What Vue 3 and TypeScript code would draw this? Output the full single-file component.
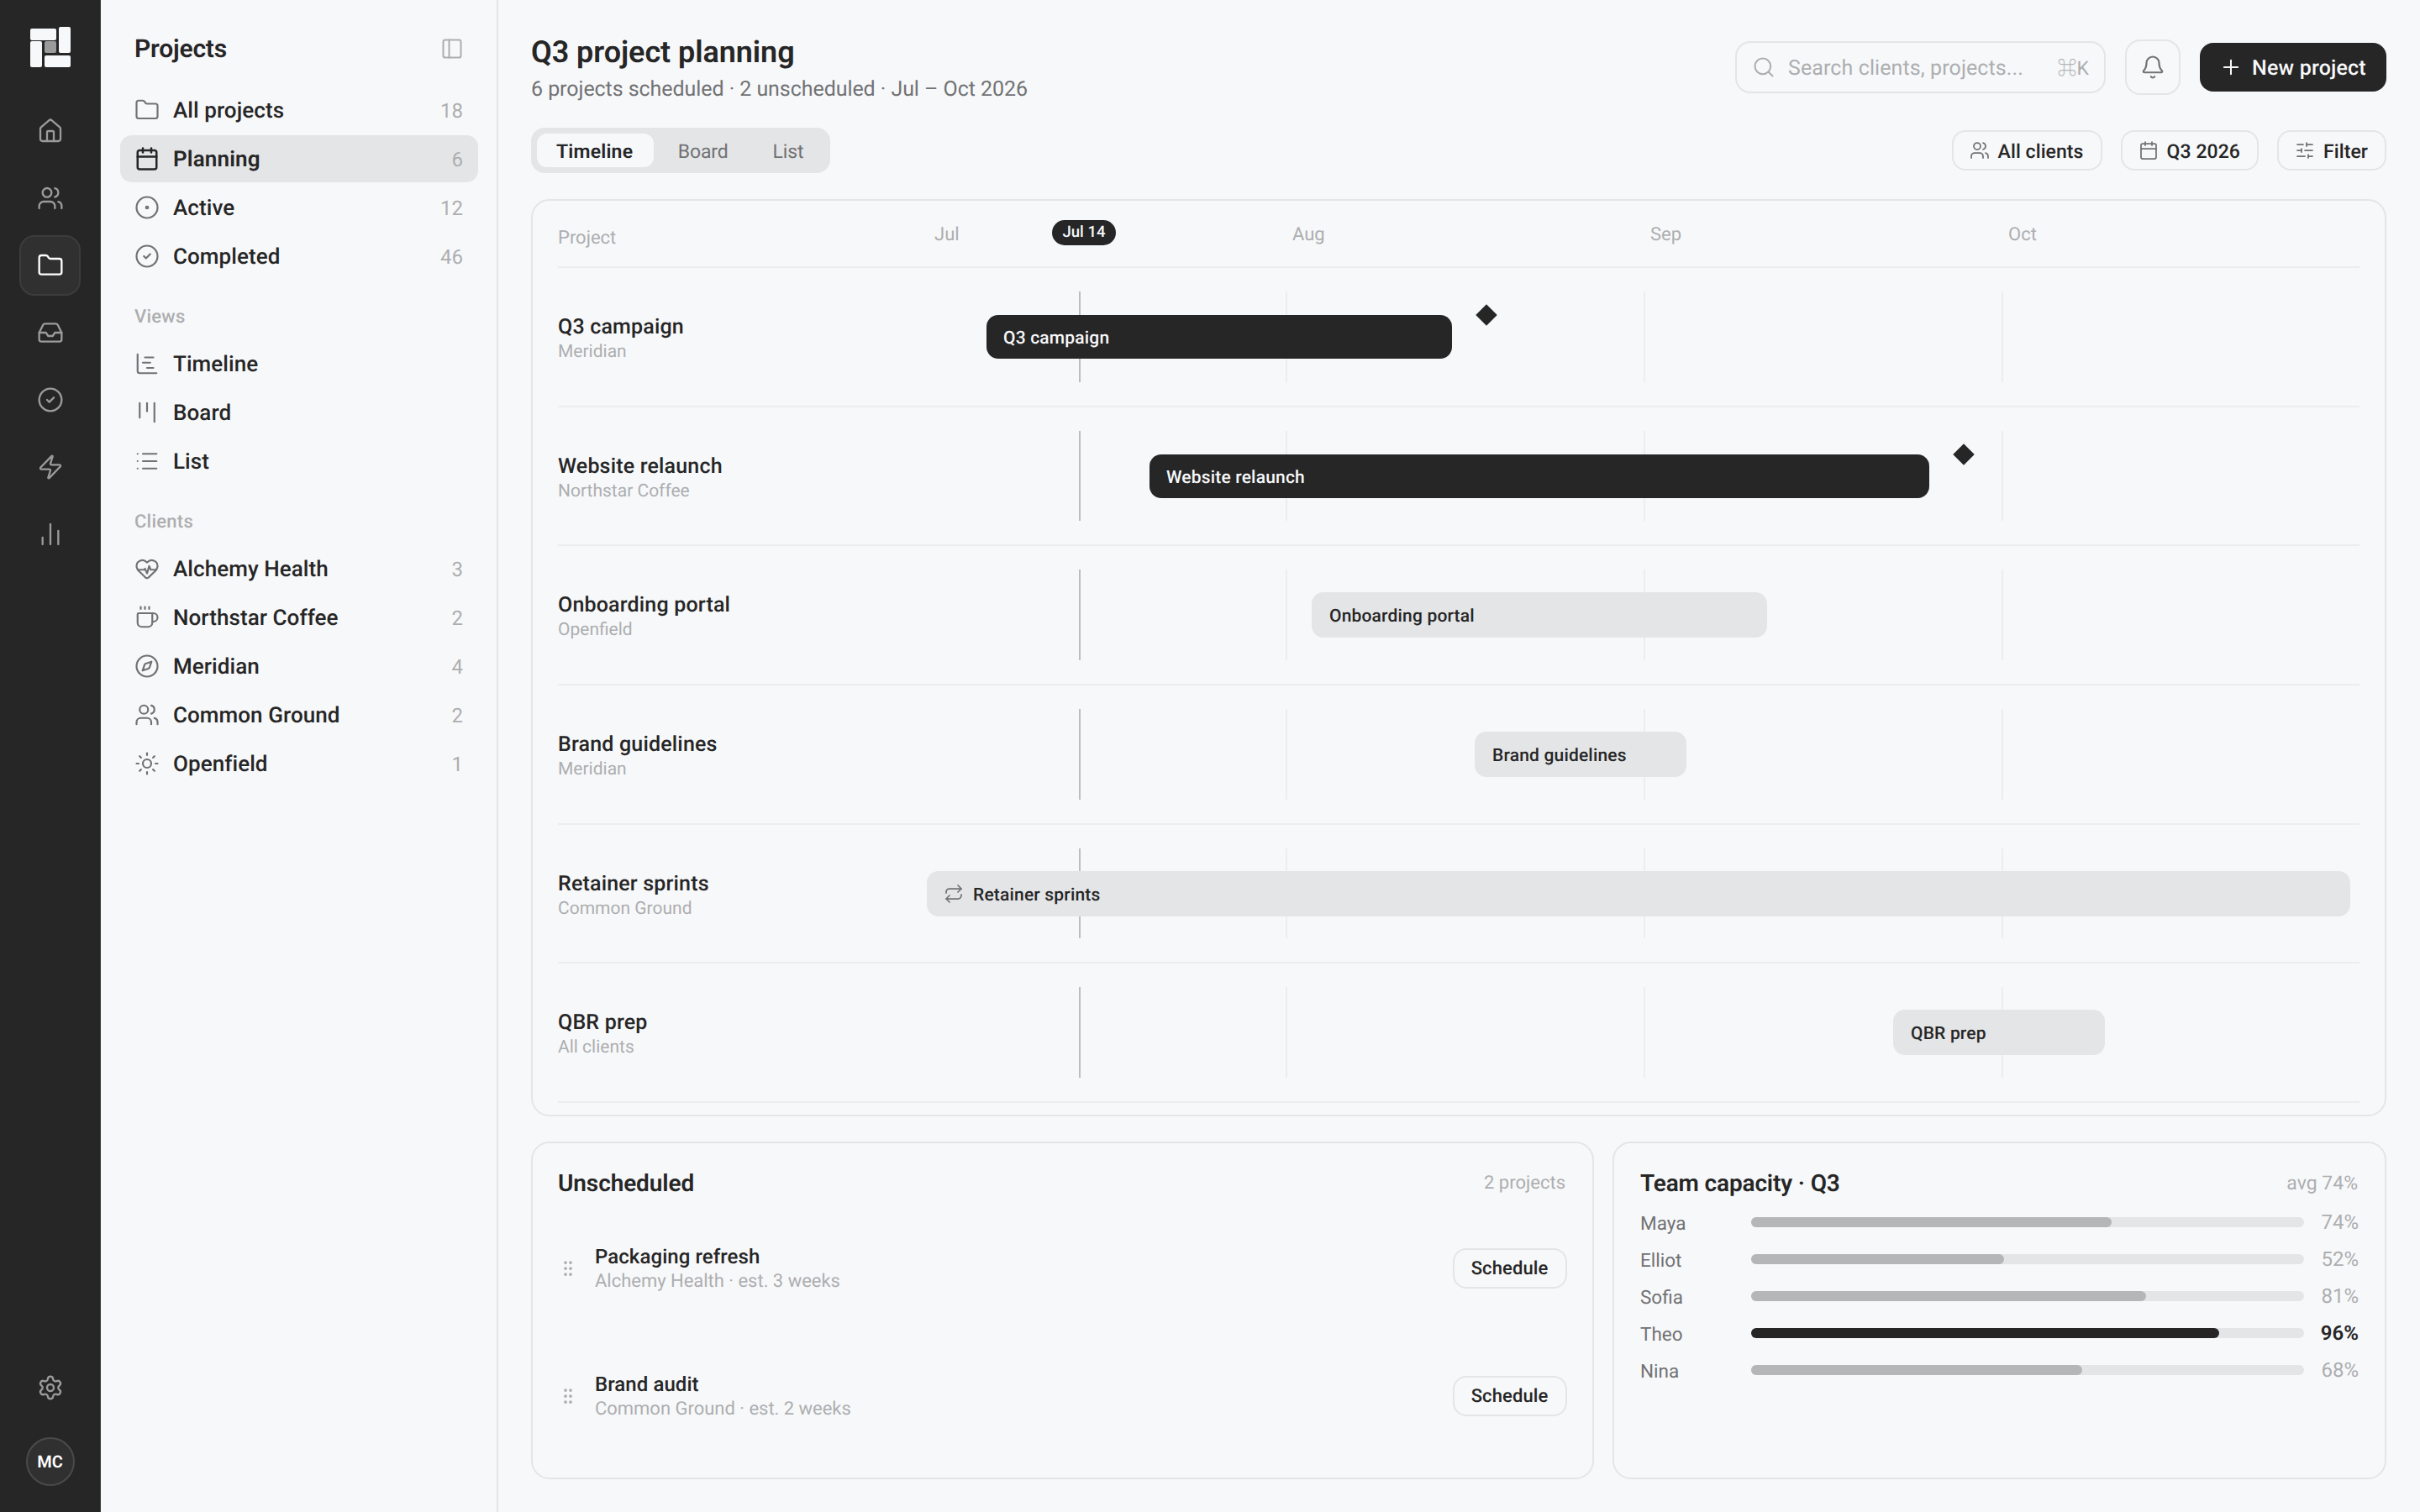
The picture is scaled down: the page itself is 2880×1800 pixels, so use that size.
<script setup lang="ts">
import { h, type FunctionalComponent } from 'vue'

type Shape = string | [number, number, number] | [number, number, number, number, number]

/* String = path, three numbers = circle (cx, cy, r), five = rect (x, y, w, h, rx). */
const glyphs: Record<string, Shape[]> = {
  home: ['M15 21v-8a1 1 0 0 0-1-1h-4a1 1 0 0 0-1 1v8', 'M3 10a2 2 0 0 1 .709-1.528l7-6a2 2 0 0 1 2.582 0l7 6A2 2 0 0 1 21 10v9a2 2 0 0 1-2 2H5a2 2 0 0 1-2-2z'],
  users: ['M16 21v-2a4 4 0 0 0-4-4H6a4 4 0 0 0-4 4v2', 'M16 3.128a4 4 0 0 1 0 7.744', 'M22 21v-2a4 4 0 0 0-3-3.87', [9, 7, 4]],
  folder: ['M20 20a2 2 0 0 0 2-2V8a2 2 0 0 0-2-2h-7.9a2 2 0 0 1-1.69-.9L9.6 3.9A2 2 0 0 0 7.93 3H4a2 2 0 0 0-2 2v13a2 2 0 0 0 2 2Z'],
  inbox: ['M22 12h-6l-2 3h-4l-2-3H2', 'M5.45 5.11 2 12v6a2 2 0 0 0 2 2h16a2 2 0 0 0 2-2v-6l-3.45-6.89A2 2 0 0 0 16.76 4H7.24a2 2 0 0 0-1.79 1.11z'],
  check: [[12, 12, 10], 'm9 12 2 2 4-4'],
  zap: ['M4 14a1 1 0 0 1-.78-1.63l9.9-10.2a.5.5 0 0 1 .86.46l-1.92 6.02A1 1 0 0 0 13 10h7a1 1 0 0 1 .78 1.63l-9.9 10.2a.5.5 0 0 1-.86-.46l1.92-6.02A1 1 0 0 0 11 14z'],
  chart: ['M5 21v-6', 'M12 21V3', 'M19 21V9'],
  settings: ['M9.671 4.136a2.34 2.34 0 0 1 4.659 0 2.34 2.34 0 0 0 3.319 1.915 2.34 2.34 0 0 1 2.33 4.033 2.34 2.34 0 0 0 0 3.831 2.34 2.34 0 0 1-2.33 4.033 2.34 2.34 0 0 0-3.319 1.915 2.34 2.34 0 0 1-4.659 0 2.34 2.34 0 0 0-3.32-1.915 2.34 2.34 0 0 1-2.33-4.033 2.34 2.34 0 0 0 0-3.831A2.34 2.34 0 0 1 6.35 6.051a2.34 2.34 0 0 0 3.319-1.915', [12, 12, 3]],
  panel: [[3, 3, 18, 18, 2], 'M9 3v18'],
  calendar: ['M8 2v4', 'M16 2v4', [3, 4, 18, 18, 2], 'M3 10h18'],
  dot: [[12, 12, 10], [12, 12, 1]],
  gantt: ['M3 3v16a2 2 0 0 0 2 2h16', 'M10 6h8', 'M8 11h7', 'M12 16h6'],
  board: ['M5 3v14', 'M12 3v8', 'M19 3v18'],
  list: ['M3 5h.01', 'M3 12h.01', 'M3 19h.01', 'M8 5h13', 'M8 12h13', 'M8 19h13'],
  heart: ['M2 9.5a5.5 5.5 0 0 1 9.591-3.676.56.56 0 0 0 .818 0A5.49 5.49 0 0 1 22 9.5c0 2.29-1.5 4-3 5.5l-5.492 5.313a2 2 0 0 1-3 .019L5 15c-1.5-1.5-3-3.2-3-5.5', 'M3.22 13H9.5l.5-1 2 4.5 2-7 1.5 3.5h5.27'],
  coffee: ['M10 2v2', 'M14 2v2', 'M16 8a1 1 0 0 1 1 1v8a4 4 0 0 1-4 4H7a4 4 0 0 1-4-4V9a1 1 0 0 1 1-1h14a4 4 0 1 1 0 8h-1', 'M6 2v2'],
  compass: ['m16.24 7.76-1.804 5.411a2 2 0 0 1-1.265 1.265L7.76 16.24l1.804-5.411a2 2 0 0 1 1.265-1.265z', [12, 12, 10]],
  sun: [[12, 12, 4], 'M12 2v2', 'M12 20v2', 'm4.93 4.93 1.41 1.41', 'm17.66 17.66 1.41 1.41', 'M2 12h2', 'M20 12h2', 'm6.34 17.66-1.41 1.41', 'm19.07 4.93-1.41 1.41'],
  search: ['m21 21-4.34-4.34', [11, 11, 8]],
  bell: ['M10.268 21a2 2 0 0 0 3.464 0', 'M3.262 15.326A1 1 0 0 0 4 17h16a1 1 0 0 0 .74-1.673C19.41 13.956 18 12.499 18 8A6 6 0 0 0 6 8c0 4.499-1.411 5.956-2.738 7.326'],
  plus: ['M5 12h14', 'M12 5v14'],
  sliders: ['M10 5H3', 'M12 19H3', 'M14 3v4', 'M16 17v4', 'M21 12h-9', 'M21 19h-5', 'M21 5h-7', 'M8 10v4', 'M8 12H3'],
  repeat: ['m17 2 4 4-4 4', 'M3 11v-1a4 4 0 0 1 4-4h14', 'm7 22-4-4 4-4', 'M21 13v1a4 4 0 0 1-4 4H3'],
  grip: [[9, 12, 1], [9, 5, 1], [9, 19, 1], [15, 12, 1], [15, 5, 1], [15, 19, 1]],
}

const Icon: FunctionalComponent<{ name: string; size: number; weight?: number }> = (props) =>
  h(
    'svg',
    {
      width: props.size,
      height: props.size,
      viewBox: '0 0 24 24',
      fill: 'none',
      stroke: 'currentColor',
      'stroke-width': props.weight ?? 1.75,
      'stroke-linecap': 'round',
      'stroke-linejoin': 'round',
      style: { display: 'block', flex: 'none' },
    },
    glyphs[props.name].map((s) =>
      typeof s === 'string'
        ? h('path', { d: s })
        : s.length === 3
          ? h('circle', { cx: s[0], cy: s[1], r: s[2] })
          : h('rect', { x: s[0], y: s[1], width: s[2], height: s[3], rx: s[4] }),
    ),
  )
Icon.props = ['name', 'size', 'weight']

const rail = ['home', 'users', 'folder', 'inbox', 'check', 'zap', 'chart']

interface NavItem { icon: string; label: string; count?: number; active?: boolean }
const groups: { title?: string; items: NavItem[] }[] = [
  {
    items: [
      { icon: 'folder', label: 'All projects', count: 18 },
      { icon: 'calendar', label: 'Planning', count: 6, active: true },
      { icon: 'dot', label: 'Active', count: 12 },
      { icon: 'check', label: 'Completed', count: 46 },
    ],
  },
  {
    title: 'Views',
    items: [
      { icon: 'gantt', label: 'Timeline' },
      { icon: 'board', label: 'Board' },
      { icon: 'list', label: 'List' },
    ],
  },
  {
    title: 'Clients',
    items: [
      { icon: 'heart', label: 'Alchemy Health', count: 3 },
      { icon: 'coffee', label: 'Northstar Coffee', count: 2 },
      { icon: 'compass', label: 'Meridian', count: 4 },
      { icon: 'users', label: 'Common Ground', count: 2 },
      { icon: 'sun', label: 'Openfield', count: 1 },
    ],
  },
]

const months = ['Jul', 'Aug', 'Sep', 'Oct']
const TRACK = 1704
const pct = (v: number) => `${(v / TRACK) * 100}%`

interface Project { name: string; client: string; start: number; length: number; dark?: boolean; milestone?: number; repeat?: boolean }
const projects: Project[] = [
  { name: 'Q3 campaign', client: 'Meridian', start: 70, length: 554, dark: true, milestone: 665 },
  { name: 'Website relaunch', client: 'Northstar Coffee', start: 264, length: 928, dark: true, milestone: 1233 },
  { name: 'Onboarding portal', client: 'Openfield', start: 457, length: 542 },
  { name: 'Brand guidelines', client: 'Meridian', start: 651, length: 252 },
  { name: 'Retainer sprints', client: 'Common Ground', start: -1, length: 1694, repeat: true },
  { name: 'QBR prep', client: 'All clients', start: 1149, length: 252 },
]

const unscheduled = [
  { name: 'Packaging refresh', meta: 'Alchemy Health · est. 3 weeks' },
  { name: 'Brand audit', meta: 'Common Ground · est. 2 weeks' },
]

const team = [
  { name: 'Maya', load: 74 },
  { name: 'Elliot', load: 52 },
  { name: 'Sofia', load: 81 },
  { name: 'Theo', load: 96 },
  { name: 'Nina', load: 68 },
]
/* The full track stands for about 113% load. */
const fill = (load: number) => `${load * 0.881}%`
</script>

<template>
  <div class="app">
    <nav class="rail">
      <svg class="logo" width="48" height="48" viewBox="0 0 48 48">
        <rect x="0" y="2" width="31" height="14" rx="2" />
        <rect x="34" y="0" width="14" height="31" rx="2" />
        <rect x="0" y="17" width="14" height="31" rx="2" />
        <rect x="17" y="34" width="31" height="14" rx="2" />
        <rect class="core" x="17" y="17" width="14" height="14" rx="2" />
      </svg>
      <div class="rail-list">
        <div v-for="name in rail" :key="name" class="rail-item" :class="{ on: name === 'folder' }">
          <Icon :name="name" :size="32" />
        </div>
      </div>
      <div class="rail-item"><Icon name="settings" :size="32" /></div>
      <div class="avatar">MC</div>
    </nav>

    <aside class="side">
      <div class="side-head">
        <h2>Projects</h2>
        <Icon name="panel" :size="28" />
      </div>
      <div v-for="(group, i) in groups" :key="i" class="group">
        <div v-if="group.title" class="group-title">{{ group.title }}</div>
        <div v-for="item in group.items" :key="item.label" class="item" :class="{ active: item.active }">
          <Icon :name="item.icon" :size="30" :weight="item.active ? 2 : 1.75" />
          <span class="item-label">{{ item.label }}</span>
          <span v-if="item.count" class="item-count">{{ item.count }}</span>
        </div>
      </div>
    </aside>

    <main class="main">
      <header class="top">
        <div class="titles">
          <h1>Q3 project planning</h1>
          <p>6 projects scheduled · 2 unscheduled · Jul – Oct 2026</p>
        </div>
        <div class="search">
          <Icon name="search" :size="28" />
          <span class="search-text">Search clients, projects...</span>
          <span class="kbd">⌘K</span>
        </div>
        <div class="bell"><Icon name="bell" :size="30" /></div>
        <div class="new"><Icon name="plus" :size="28" /><span>New project</span></div>
      </header>

      <div class="tools">
        <div class="tabs">
          <span class="tab on">Timeline</span>
          <span class="tab">Board</span>
          <span class="tab">List</span>
        </div>
        <div class="chips">
          <div class="chip"><Icon name="users" :size="24" /><span>All clients</span></div>
          <div class="chip"><Icon name="calendar" :size="24" /><span>Q3 2026</span></div>
          <div class="chip"><Icon name="sliders" :size="24" /><span>Filter</span></div>
        </div>
      </div>

      <section class="card plan">
        <div class="plan-head">
          <span class="plan-label">Project</span>
          <div class="months">
            <span v-for="m in months" :key="m">{{ m }}</span>
            <span class="today-pill">Jul 14</span>
          </div>
        </div>
        <div v-for="p in projects" :key="p.name" class="plan-row">
          <div class="who">
            <div class="who-name">{{ p.name }}</div>
            <div class="who-client">{{ p.client }}</div>
          </div>
          <div class="track">
            <i v-for="n in 3" :key="n" class="grid-line" :style="{ left: n * 25 + '%' }"></i>
            <i class="today"></i>
            <div class="bar" :class="{ dark: p.dark }" :style="{ left: pct(p.start), width: pct(p.length) }">
              <Icon v-if="p.repeat" name="repeat" :size="24" />
              <span>{{ p.name }}</span>
            </div>
            <i v-if="p.milestone" class="diamond" :style="{ left: pct(p.milestone) }"></i>
          </div>
        </div>
      </section>

      <div class="bottom">
        <section class="card unscheduled">
          <div class="card-head"><h3>Unscheduled</h3><span>2 projects</span></div>
          <div v-for="u in unscheduled" :key="u.name" class="todo">
            <Icon name="grip" :size="24" />
            <div class="todo-text">
              <div class="todo-name">{{ u.name }}</div>
              <div class="todo-meta">{{ u.meta }}</div>
            </div>
            <div class="schedule">Schedule</div>
          </div>
        </section>
        <section class="card team">
          <div class="card-head"><h3>Team capacity · Q3</h3><span>avg 74%</span></div>
          <div v-for="t in team" :key="t.name" class="member" :class="{ hot: t.load > 90 }">
            <span class="member-name">{{ t.name }}</span>
            <div class="meter"><div class="meter-fill" :style="{ width: fill(t.load) }"></div></div>
            <span class="member-load">{{ t.load }}%</span>
          </div>
        </section>
      </div>
    </main>
  </div>
</template>

<style>
body {
  margin: 0;
  background: #f7f8fa;
}
</style>

<style scoped>
.app {
  display: flex;
  width: 2880px;
  height: 1800px;
  overflow: hidden;
  background: #f7f8fa;
  color: #262626;
  font-family: Roboto, "Liberation Sans", sans-serif;
  font-size: 26px;
  line-height: 30px;
  text-rendering: geometricPrecision;
}
.app * {
  box-sizing: border-box;
}
h1, h2, h3, p {
  margin: 0;
}

/* Icon rail */
.rail {
  width: 120px;
  flex: none;
  display: flex;
  flex-direction: column;
  align-items: center;
  padding: 32px 0 31px;
  background: #262626;
  border-right: 1px solid #3a3a3a;
  color: #9b9b9b;
}
.logo {
  fill: #f7f8fa;
  flex: none;
}
.logo .core {
  fill: #9b9b9b;
}
.rail-list {
  flex: 1;
  display: flex;
  flex-direction: column;
  gap: 8px;
  margin-top: 40px;
}
.rail-item {
  width: 73px;
  height: 72px;
  display: flex;
  align-items: center;
  justify-content: center;
  border: 2px solid transparent;
  border-radius: 18px;
}
.rail-item.on {
  background: #303030;
  border-color: #3c3c3c;
  color: #fff;
}
.avatar {
  width: 58px;
  height: 58px;
  margin-top: 23px;
  display: flex;
  align-items: center;
  justify-content: center;
  border: 2px solid #4a4a4a;
  border-radius: 50%;
  background: #303030;
  color: #fff;
  font-size: 20px;
  font-weight: 600;
}

/* Sidebar */
.side {
  width: 473px;
  flex: none;
  padding: 0 22px 0 23px;
  border-right: 2px solid #e4e5e7;
}
.side-head {
  display: flex;
  align-items: flex-start;
  justify-content: space-between;
  height: 103px;
  padding: 27px 17px 0;
  color: #adaeb0;
}
.side-head h2 {
  color: #262626;
  font-size: 30px;
  line-height: 64px;
  font-weight: 600;
  letter-spacing: -0.2px;
}
.side-head svg {
  margin-top: 17px;
}
.group {
  display: flex;
  flex-direction: column;
  gap: 2px;
}
.group-title {
  height: 70px;
  padding: 32px 17px 0;
  font-size: 22px;
  line-height: 26px;
  font-weight: 480;
  letter-spacing: 0.25px;
  color: #adaeb0;
}
.item {
  display: flex;
  align-items: center;
  gap: 16px;
  height: 56px;
  padding: 0 18px 0 17px;
  border-radius: 14px;
  color: #717274;
}
.item.active {
  background: #e4e5e7;
  color: #262626;
}
.item-label {
  flex: 1;
  padding-top: 2px;
  color: #262626;
  font-weight: 480;
  letter-spacing: 0.07px;
}
.item.active .item-label {
  font-weight: 600;
  letter-spacing: 0.15px;
}
.item-count {
  padding-top: 1px;
  font-size: 24px;
  color: #adaeb0;
}

/* Main column */
.main {
  flex: 1;
  min-width: 0;
  display: flex;
  flex-direction: column;
  padding: 40px 40px 39px 39px;
}
.top {
  display: flex;
  align-items: center;
  gap: 23px;
  height: 80px;
}
.titles {
  flex: 1;
  padding-top: 5px;
}
h1 {
  font-size: 36px;
  line-height: 44px;
  font-weight: 600;
  letter-spacing: -0.07px;
}
.titles p {
  line-height: 36px;
  margin-top: 5px;
  font-size: 25px;
  letter-spacing: -0.06px;
  color: #717274;
}
.search {
  display: flex;
  align-items: center;
  width: 441px;
  height: 62px;
  padding: 0 18px;
  border: 2px solid #e4e5e7;
  border-radius: 18px;
  color: #adaeb0;
  font-size: 25px;
}
.search-text {
  flex: 1;
  margin-left: 15px;
  padding-top: 3px;
  letter-spacing: 0.1px;
}
.kbd {
  padding-top: 3px;
  font-family: Roboto, "Noto Sans CJK JP", sans-serif;
  font-size: 23px;
}
.bell {
  display: flex;
  align-items: center;
  justify-content: center;
  width: 66px;
  height: 66px;
  border: 2px solid #e4e5e7;
  border-radius: 18px;
  color: #717274;
}
.new {
  display: flex;
  align-items: center;
  gap: 11px;
  width: 222px;
  height: 58px;
  padding-left: 23px;
  border-radius: 16px;
  background: #262626;
  color: #f7f8fa;
  font-size: 25px;
  font-weight: 480;
  letter-spacing: 0.2px;
  white-space: nowrap;
}
.new span {
  padding-top: 3px;
}
.tools {
  display: flex;
  align-items: center;
  justify-content: space-between;
  height: 54px;
  margin-top: 32px;
}
.tabs {
  display: flex;
  gap: 4px;
  height: 54px;
  padding: 7px;
  border-radius: 16px;
  background: #e4e5e7;
  font-size: 23px;
  letter-spacing: -0.15px;
  color: #717274;
}
.tab {
  height: 40px;
  padding: 0 24.5px;
  line-height: 43px;
  border-radius: 12px;
}
.tab.on {
  padding: 0 25px 0 23px;
  background: #f7f8fa;
  color: #262626;
  font-weight: 580;
  letter-spacing: 0.2px;
}
.chips {
  display: flex;
  gap: 22px;
}
.chip {
  display: flex;
  align-items: center;
  gap: 10px;
  height: 48px;
  padding: 0 20px 0 19px;
  border: 2px solid #e4e5e7;
  border-radius: 16px;
  font-size: 23px;
  font-weight: 490;
  letter-spacing: 0.08px;
}
.chip span {
  padding-top: 3px;
}
.chip svg {
  color: #717274;
}
.card {
  border: 2px solid #e4e5e7;
  border-radius: 22px;
}

/* Timeline */
.plan {
  display: flex;
  flex-direction: column;
  height: 1092px;
  margin-top: 31px;
  padding: 0 30px 14px;
}
.plan-head {
  display: flex;
  height: 80px;
  flex: none;
  border-bottom: 2px solid #ecedef;
  font-size: 22px;
  color: #adaeb0;
}
.plan-label {
  width: 440px;
  padding-top: 30px;
}
.months {
  position: relative;
  flex: 1;
  display: grid;
  grid-template-columns: repeat(4, 1fr);
  padding-top: 26px;
}
.months > span {
  padding-left: 8px;
}
.months > .today-pill {
  position: absolute;
  top: 23px;
  left: 148px;
  width: 76px;
  height: 30px;
  padding: 0;
  border-radius: 15px;
  background: #262626;
  color: #f7f8fa;
  font-size: 18.5px;
  line-height: 29px;
  font-weight: 500;
  text-align: center;
}
.plan-row {
  flex: 1;
  display: flex;
  padding: 28px 0;
  border-bottom: 2px solid #ecedef;
}
.who {
  width: 440px;
  align-self: center;
  padding-top: 7px;
}
.who-name {
  font-size: 25px;
  font-weight: 480;
  letter-spacing: 0.18px;
}
.who-client {
  font-size: 21px;
  line-height: 29px;
  color: #adaeb0;
}
.track {
  position: relative;
  flex: 1;
}
.grid-line {
  position: absolute;
  top: 0;
  bottom: 0;
  width: 2px;
  background: #ecedef;
}
.today {
  position: absolute;
  top: 0;
  bottom: 0;
  left: 180px;
  width: 2px;
  background: #bcbdbf;
}
.bar {
  position: absolute;
  top: 50%;
  transform: translateY(-50%);
  display: flex;
  align-items: center;
  gap: 11px;
  height: 54px;
  padding: 4px 21px 0;
  border-radius: 14px;
  background: #e4e5e7;
  font-size: 21px;
  font-weight: 480;
  letter-spacing: 0.18px;
}
.bar svg {
  color: #717274;
  margin: -4px 0 0 -1px;
}
.bar.dark {
  height: 52px;
  padding-left: 20px;
  background: #262626;
  color: #f7f8fa;
}
.diamond {
  position: absolute;
  top: 50%;
  width: 18px;
  height: 18px;
  margin: -35px 0 0 -9px;
  background: #262626;
  transform: rotate(45deg);
}

/* Bottom cards */
.bottom {
  flex: 1;
  display: grid;
  grid-template-columns: 1265fr 921fr;
  gap: 22px;
  margin-top: 30px;
}
.bottom .card {
  padding: 28px 30px 0;
}
.bottom .team {
  padding-left: 31px;
}
.card-head {
  display: flex;
  justify-content: space-between;
  height: 45px;
}
h3 {
  font-size: 28px;
  line-height: 40px;
  font-weight: 600;
  letter-spacing: -0.1px;
}
.card-head span {
  padding-right: 2px;
  font-size: 22px;
  line-height: 39px;
  color: #adaeb0;
}
.todo {
  display: flex;
  align-items: center;
  height: 152px;
  color: #adaeb0;
}
.todo-text {
  flex: 1;
  margin-left: 20px;
}
.todo-name {
  font-size: 24px;
  font-weight: 480;
  letter-spacing: 0.07px;
  color: #262626;
}
.todo-meta {
  padding-top: 1px;
  font-size: 22px;
  line-height: 28px;
  letter-spacing: -0.02px;
}
.schedule {
  width: 136px;
  height: 48px;
  padding-right: 1px;
  border: 2px solid #e4e5e7;
  border-radius: 16px;
  font-size: 22px;
  line-height: 45px;
  font-weight: 500;
  letter-spacing: 0.1px;
  text-align: center;
  color: #262626;
}
.member {
  display: flex;
  align-items: center;
  height: 44px;
  font-size: 24px;
}
.team .card-head {
  height: 44px;
}
.team h3 {
  letter-spacing: -0.15px;
}
.team .card-head span {
  font-size: 23px;
}
.member-name {
  width: 132px;
  padding-top: 4px;
  font-size: 22.5px;
  color: #717274;
}
.meter {
  flex: 1;
  height: 12px;
  border-radius: 6px;
  background: #e4e5e7;
}
.meter-fill {
  height: 12px;
  border-radius: 6px;
  background: #b5b6b8;
}
.member-load {
  width: 66px;
  padding-right: 1px;
  text-align: right;
  color: #adaeb0;
}
.hot .meter-fill {
  background: #262626;
}
.hot .member-load {
  color: #262626;
  font-weight: 600;
}
</style>
